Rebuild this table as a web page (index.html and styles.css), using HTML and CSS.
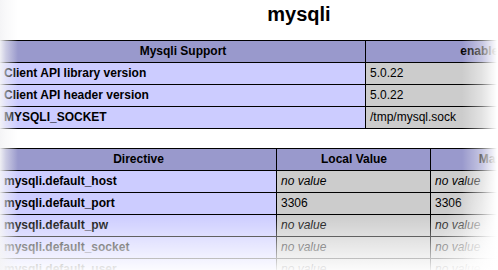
FILE: index.html
```html
<!DOCTYPE html>
<html>
<head>
<meta charset="utf-8">
<link rel="stylesheet" href="styles.css">
</head>
<body>
<div class="page">
  <h2 class="title">mysqli</h2>
  <table class="info t1">
    <colgroup><col class="c1a"><col class="c1b"></colgroup>
    <tr class="h"><th>Mysqli Support</th><th>enabled</th></tr>
    <tr><td class="e">Client API library version</td><td class="v">5.0.22</td></tr>
    <tr><td class="e">Client API header version</td><td class="v">5.0.22</td></tr>
    <tr><td class="e">MYSQLI_SOCKET</td><td class="v">/tmp/mysql.sock</td></tr>
  </table>
  <table class="info t2">
    <colgroup><col class="c2a"><col class="c2b"><col class="c2c"></colgroup>
    <tr class="h"><th>Directive</th><th>Local Value</th><th>Master Value</th></tr>
    <tr><td class="e">mysqli.default_host</td><td class="v"><i>no value</i></td><td class="v"><i>no value</i></td></tr>
    <tr><td class="e">mysqli.default_port</td><td class="v">3306</td><td class="v">3306</td></tr>
    <tr><td class="e">mysqli.default_pw</td><td class="v"><i>no value</i></td><td class="v"><i>no value</i></td></tr>
    <tr><td class="e">mysqli.default_socket</td><td class="v"><i>no value</i></td><td class="v"><i>no value</i></td></tr>
    <tr><td class="e">mysqli.default_user</td><td class="v"><i>no value</i></td><td class="v"><i>no value</i></td></tr>
  </table>
</div>
<div class="fade"></div>
</body>
</html>
```
FILE: styles.css
```css
html, body {
  margin: 0;
  padding: 0;
  background: #ffffff;
  overflow: hidden;
  width: 498px;
  height: 270px;
}
body {
  position: relative;
  font-family: "Liberation Sans", Arial, sans-serif;
  color: #000;
}
.page {
  width: 600px;
  margin-left: -1px;
  display: flex;
  flex-direction: column;
}
.title {
  margin: 2px 0 14px 0;
  font-size: 20px;
  line-height: 24px;
  font-weight: bold;
  text-align: center;
}
.info {
  border-collapse: collapse;
  table-layout: fixed;
  width: 600px;
  font-size: 12px;
  line-height: 15px;
}
.t2 { margin-top: 19px; }
.info th, .info td {
  border: 1px solid #000;
  padding: 3px 3px 3px 4px;
  white-space: nowrap;
  overflow: hidden;
  vertical-align: baseline;
}
.h th {
  background: #9999cc;
  font-weight: bold;
  text-align: center;
}
.e {
  background: #ccccff;
  font-weight: bold;
  text-align: left;
}
.v {
  background: #cccccc;
  text-align: left;
}
.c1a { width: 366px; }
.c1b { width: 234px; }
.c2a { width: 277px; }
.c2b { width: 154px; }
.c2c { width: 169px; }
.fade {
  position: absolute;
  left: 0;
  top: 0;
  width: 498px;
  height: 270px;
  pointer-events: none;
  background:
    linear-gradient(to right, rgba(244,244,246,0.95) 0px, rgba(244,244,246,0.55) 6px, rgba(244,244,246,0) 18px),
    linear-gradient(to right, rgba(255,255,255,0) 462px, rgba(255,255,255,0.45) 482px, rgba(255,255,255,1) 497px),
    linear-gradient(to bottom, rgba(255,255,255,0) 215px, rgba(255,255,255,0.55) 246px, rgba(255,255,255,0.93) 270px),
    radial-gradient(ellipse 60px 110px at 498px 270px, rgba(255,255,255,0.9) 0%, rgba(255,255,255,0) 100%);
}
```
